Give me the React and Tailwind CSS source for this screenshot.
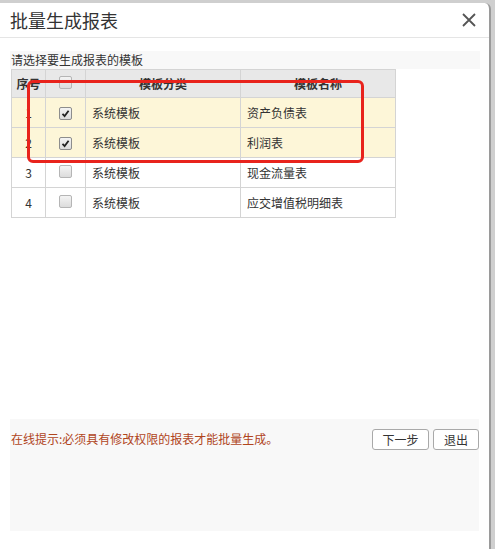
import { useState } from "react";

const rows = [
  { id: 1, type: "系统模板", name: "资产负债表", checked: true },
  { id: 2, type: "系统模板", name: "利润表", checked: true },
  { id: 3, type: "系统模板", name: "现金流量表", checked: false },
  { id: 4, type: "系统模板", name: "应交增值税明细表", checked: false },
];

function Box({ checked, onClick }) {
  return (
    <span
      onClick={onClick}
      className={
        "inline-flex w-[13px] h-[13px] items-center justify-center rounded-[2px] border bg-gradient-to-b from-[#f4f4f4] to-[#dcdcdc] " +
        (checked ? "border-[#8d8d8d]" : "border-[#b5b5b5]")
      }
    >
      {checked && (
        <svg width="9" height="9" viewBox="0 0 9 9">
          <path d="M1.5 4.8 L3.6 7 L7.6 1.8" fill="none" stroke="#222" strokeWidth="1.8" />
        </svg>
      )}
    </span>
  );
}

export default function App() {
  const [data, setData] = useState(rows);

  const toggle = (id) => {
    setData(data.map((r) => (r.id === id ? { ...r, checked: !r.checked } : r)));
  };

  return (
    <div
      className="w-[495px] h-[549px] bg-[#cfcfcf] pt-[3px] overflow-hidden"
      style={{ fontFamily: '"Noto Sans CJK SC", "Noto Sans", sans-serif' }}
    >
      <div className="w-[491px] h-[546px] bg-white border-r-2 border-[#9a9a9a] rounded-tr-[6px] flex flex-col">
        {/* header */}
        <div className="h-[35px] border-b border-[#e5e5e5] flex items-center justify-between pl-[10px] pr-[12px]">
          <span className="text-[18px] text-[#333] leading-none">批量生成报表</span>
          <svg width="16" height="16" viewBox="0 0 16 16">
            <path d="M2 2 L14 14 M14 2 L2 14" stroke="#555" strokeWidth="1.8" />
          </svg>
        </div>

        <div className="pl-[10px] pr-[9px] pt-[13px]">
          <div className="bg-[#f8f8f8] text-[12px] leading-[18px] text-[#333] pl-[1px]">
            请选择要生成报表的模板
          </div>

          <div className="relative">
            <table className="ml-[1px] border-collapse text-[12px] text-[#333]">
              <thead>
                <tr className="bg-[#e8e8e8] h-[28px]">
                  <th className="w-[34px] border border-[#d4d4d4] font-bold">序号</th>
                  <th className="w-[40px] border border-[#d4d4d4]">
                    <Box checked={false} />
                  </th>
                  <th className="w-[155px] border border-[#d4d4d4] font-bold">模板分类</th>
                  <th className="w-[155px] border border-[#d4d4d4] font-bold">模板名称</th>
                </tr>
              </thead>
              <tbody>
                {data.map((r) => (
                  <tr key={r.id} className={"h-[30px] " + (r.id <= 2 ? "bg-[#fdf6d8]" : "bg-white")}>
                    <td className="border border-[#d4d4d4] text-center">{r.id}</td>
                    <td className="border border-[#d4d4d4] text-center">
                      <Box checked={r.checked} onClick={() => toggle(r.id)} />
                    </td>
                    <td className="border border-[#d4d4d4] pl-[6px]">{r.type}</td>
                    <td className="border border-[#d4d4d4] pl-[6px]">{r.name}</td>
                  </tr>
                ))}
              </tbody>
            </table>

            {/* red annotation */}
            <div className="absolute left-[17px] top-[11px] w-[337px] h-[83px] border-[3px] border-[#e8231c] rounded-[6px] pointer-events-none" />
          </div>
        </div>

        <div className="flex-1" />

        {/* footer */}
        <div className="mx-[10px] mb-[18px] h-[112px] bg-[#f8f8f8] flex items-start justify-between pt-[10px] pl-[1px]">
          <span className="text-[12px] text-[#b0451c] mt-[1px]">在线提示:必须具有修改权限的报表才能批量生成。</span>
          <div className="flex gap-[4px]">
            <button className="w-[57px] h-[21px] bg-white border border-[#a9a9a9] rounded-[3px] text-[12px] text-[#333] leading-none">
              下一步
            </button>
            <button className="w-[46px] h-[21px] bg-white border border-[#a9a9a9] rounded-[3px] text-[12px] text-[#333] leading-none">
              退出
            </button>
          </div>
        </div>
      </div>
    </div>
  );
}
